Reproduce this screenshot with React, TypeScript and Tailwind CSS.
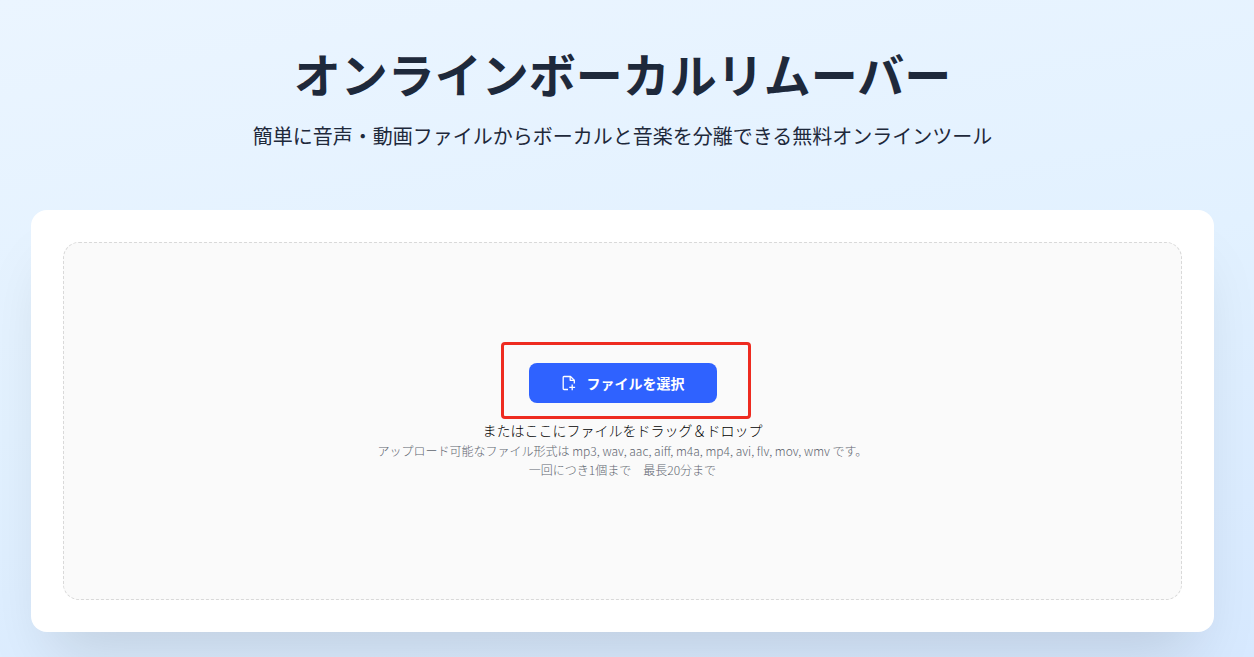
import React from 'react';

const FilePlus: React.FC = () => (
  <svg viewBox="0 0 16 16" className="size-4" fill="none" stroke="currentColor" strokeWidth="1.3" aria-hidden="true">
    <path d="M7 14.5H3a.8.8 0 0 1-.8-.8V2.3a.8.8 0 0 1 .8-.8h6.5L13.3 5.2v3.3" strokeLinejoin="round" />
    <path d="M9.2 1.5v3.8h4" strokeLinejoin="round" />
    <path d="M11.2 9.4v5.8M8.3 12.3h5.8" />
  </svg>
);

export default function App() {
  return (
    <main className="min-h-screen bg-linear-170 from-[#ebf5ff] via-[#e2f1ff] to-[#d7e9ff] pt-12 pr-10 pb-6 pl-[31px] font-['Noto_Sans_CJK_JP',sans-serif] text-[#1e293b]">
      <header className="text-center">
        <h1 className="text-[47px] leading-[50px] font-bold">オンラインボーカルリムーバー</h1>
        <p className="mt-[22px] text-xl leading-8">簡単に音声・動画ファイルからボーカルと音楽を分離できる無料オンラインツール</p>
      </header>

      <section className="mt-[58px] rounded-2xl bg-white p-8 shadow-[0_40px_60px_-20px_rgb(0_0_0/0.13)]">
        <div className="flex h-[358px] flex-col items-center justify-center rounded-2xl border border-dashed border-[#d9d9d9] bg-[#fafafa]">
          <div className="relative mb-4">
            <button type="button" className="flex h-10 items-center gap-2.5 rounded-lg bg-[#2f62ff] px-8 text-sm font-bold text-white">
              <FilePlus />
              ファイルを選択
            </button>
            {/* highlight frame around the button */}
            <div className="pointer-events-none absolute -top-[21px] -right-[34px] -bottom-4 -left-7 rounded-sm border-3 border-[#ee2b20]" />
          </div>
          <p className="text-sm leading-[22px] font-light text-black">またはここにファイルをドラッグ＆ドロップ</p>
          <p className="text-xs leading-[19px] font-light text-[#5f6670]">アップロード可能なファイル形式は mp3, wav, aac, aiff, m4a, mp4, avi, flv, mov, wmv です。</p>
          <p className="text-xs leading-[19px] font-light text-[#5f6670]">一回につき1個まで　最長20分まで</p>
        </div>
      </section>
    </main>
  );
}
